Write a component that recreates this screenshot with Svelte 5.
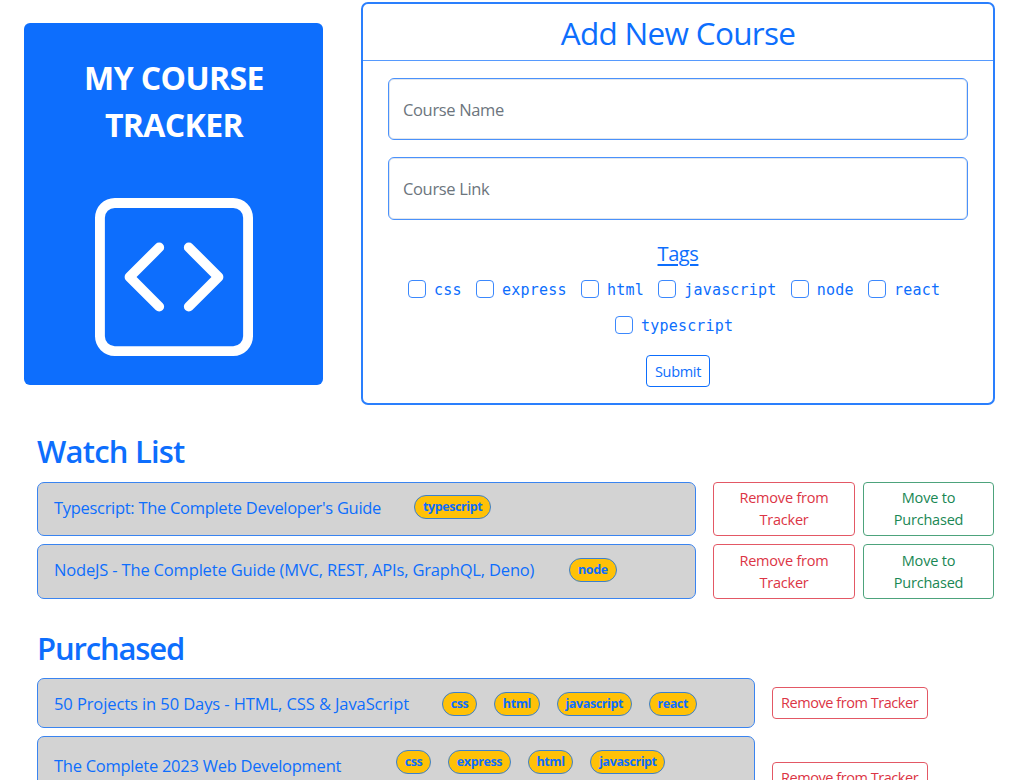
<script>
  const tags = ['css', 'express', 'html', 'javascript', 'node', 'react', 'typescript'];
  const watchList = [
    { title: "Typescript: The Complete Developer's Guide", width: 327, spacing: -0.3, height: 54, tags: ['typescript'] },
    { title: 'NodeJS - The Complete Guide (MVC, REST, APIs, GraphQL, Deno)', width: 482, spacing: -0.17, height: 55, tags: ['node'] }
  ];
  const purchased = [
    { title: '50 Projects in 50 Days - HTML, CSS & JavaScript', width: 355, spacing: -0.09, height: 50, tags: ['css', 'html', 'javascript', 'react'] },
    { title: 'The Complete 2023 Web Development', width: 309, spacing: -0.26, height: 83, top: true, tags: ['css', 'express', 'html', 'javascript'] }
  ];
</script>

<main>
  <section class="top">
    <div class="brand">
      <h1>MY COURSE<br />TRACKER</h1>
      <svg width="158" height="158" viewBox="0 0 16 16" fill="currentColor">
        <path d="M14 1a1 1 0 0 1 1 1v12a1 1 0 0 1-1 1H2a1 1 0 0 1-1-1V2a1 1 0 0 1 1-1zM2 0a2 2 0 0 0-2 2v12a2 2 0 0 0 2 2h12a2 2 0 0 0 2-2V2a2 2 0 0 0-2-2z" />
        <path d="M6.854 4.646a.5.5 0 0 1 0 .708L4.207 8l2.647 2.646a.5.5 0 0 1-.708.708l-3-3a.5.5 0 0 1 0-.708l3-3a.5.5 0 0 1 .708 0m2.292 0a.5.5 0 0 0 0 .708L11.793 8l-2.647 2.646a.5.5 0 0 0 .708.708l3-3a.5.5 0 0 0 0-.708l-3-3a.5.5 0 0 0-.708 0" />
      </svg>
    </div>
    <form class="card">
      <h2>Add New Course</h2>
      <div class="fields">
        <input class="text" placeholder="Course Name" />
        <input class="text link" placeholder="Course Link" />
        <div class="legend"><span>Tags</span></div>
        <div class="checks">
          {#each tags as tag}
            <label><input type="checkbox" /><span>{tag}</span></label>
          {/each}
        </div>
        <button type="button" class="btn submit">Submit</button>
      </div>
    </form>
  </section>

  <section class="list watch">
    <h3>Watch List</h3>
    {#each watchList as c}
      <div class="row" style:height="{c.height}px">
        <div class="course">
          <span class="title" style:width="{c.width}px" style:letter-spacing="{c.spacing}px">{c.title}</span>
          {#each c.tags as t}<span class="pill">{t}</span>{/each}
        </div>
        <button class="btn red remove">Remove from<br />Tracker</button>
        <button class="btn green">Move to<br />Purchased</button>
      </div>
    {/each}
  </section>

  <section class="list bought">
    <h3>Purchased</h3>
    {#each purchased as c}
      <div class="row" style:height="{c.height}px">
        <div class="course" class:top-align={c.top}>
          <span class="title" style:width="{c.width}px" style:letter-spacing="{c.spacing}px">{c.title}</span>
          {#each c.tags as t}<span class="pill">{t}</span>{/each}
        </div>
        <button class="btn red single">Remove from Tracker</button>
      </div>
    {/each}
  </section>
</main>

<style>
  :global(body) { overflow: hidden; background: #fff; }
  * { box-sizing: border-box; }
  main {
    height: 780px;
    overflow: hidden;
    color: #0d6efd;
    font: 370 16.5px 'Open Sans', 'Noto Sans', sans-serif;
  }
  h1, h2, h3 { margin: 0; }
  .top { display: flex; align-items: flex-start; padding: 2px 35px 0 24px; gap: 38px; height: 403px; }
  .brand {
    flex: none; width: 299px; height: 362px; margin-top: 21px; padding-top: 31px;
    display: flex; flex-direction: column; align-items: center;
    background: #0d6efd; color: #fff; border-radius: 6px;
  }
  .brand h1 { padding-left: 1px; font-size: 32px; font-weight: 700; line-height: 47px; text-align: center; letter-spacing: -0.6px; }
  .brand svg { margin: 50px 0 0 1px; }
  .card { flex: 0 0 633.4px; height: 403px; border: 2px solid #2a7ffd; border-radius: 7px; display: flex; flex-direction: column; }
  .card h2 { height: 57px; border-bottom: 1px solid #569afe; text-align: center; font-size: 31.5px; font-weight: 400; line-height: 57px; letter-spacing: -0.7px; }
  .fields { display: flex; flex-direction: column; align-items: center; padding: 17px 25px 0; }
  .text {
    width: 580px; height: 62px; padding: 1px 14px 0; border: 1px solid #4a91fb; border-radius: 6px; outline: none;
    font: 370 16.5px 'Open Sans', sans-serif; letter-spacing: -0.35px; box-shadow: inset 0 0 0 1px #e2e6ec;
  }
  .text::placeholder { color: #6c757d; opacity: 1; }
  .link { margin-top: 17px; height: 63px; padding-top: 0; }
  .legend { margin-top: 19px; height: 30px; line-height: 30px; font-size: 20px; text-decoration: underline; text-underline-offset: 3px; letter-spacing: -0.4px; }
  .checks { display: flex; flex-wrap: wrap; justify-content: center; width: 565px; margin-top: 2px; padding-right: 8px; column-gap: 14px; }
  .checks label { display: flex; align-items: center; height: 36px; font: 15px 'DejaVu Sans Mono', monospace; letter-spacing: 0.2px; }
  .checks input { appearance: none; width: 18px; height: 18px; margin: 0 8.3px 0 0; border: 1px solid #3b88fd; border-radius: 4px; }
  .checks span { padding-top: 1px; }
  .btn {
    padding: 0; border: 1px solid currentColor; border-radius: 4px; background: #fff; color: #0d6efd;
    font: 370 14.5px/22px 'Open Sans', sans-serif; letter-spacing: -0.2px; white-space: nowrap;
  }
  .submit { width: 64px; height: 32px; margin-top: 12px; padding-top: 1px; letter-spacing: -0.3px; }
  .list { padding: 0 35px 0 37px; }
  .watch { padding-top: 25px; }
  .bought { padding-top: 19px; }
  .list h3 { height: 45px; font-size: 31px; font-weight: 600; line-height: 45px; letter-spacing: -0.8px; }
  .watch h3 { margin-bottom: 9px; padding-top: 1px; }
  .bought h3 { margin-bottom: 7px; letter-spacing: -1.15px; }
  .row { display: flex; align-items: center; margin-bottom: 8px; }
  .course {
    height: 100%; width: 659px; display: flex; align-items: center; padding: 0 0 4px 16px;
    border: 1px solid #3a84f0; border-radius: 7px; background: #d3d3d3;
  }
  .bought .course { width: 718px; padding-bottom: 0; }
  .title { flex: none; margin-right: 16px; white-space: nowrap; }
  .pill {
    height: 24px; margin-left: 17px; padding: 0 8px; border: 1px solid #3a80cf; border-radius: 12px;
    background: #ffc107; font-size: 12.5px; font-weight: 700; line-height: 21px; letter-spacing: -0.4px;
  }
  .bought .pill { margin: 2px 0 0 16.9px; padding: 0 7.8px; }
  .course.top-align { align-items: flex-start; padding-top: 12px; }
  .bought .top-align .pill { margin-top: 1px; }
  .top-align .title { padding-top: 5px; }
  .red { color: #dc3545; border-color: #e35865; }
  .green { color: #198754; border-color: #4da37c; width: 131px; height: 100%; margin-left: 8px; }
  .remove { width: 142px; height: 100%; margin-left: 17px; }
  .single { width: 156px; height: 32px; margin-left: 16.6px; letter-spacing: -0.45px; }
</style>
